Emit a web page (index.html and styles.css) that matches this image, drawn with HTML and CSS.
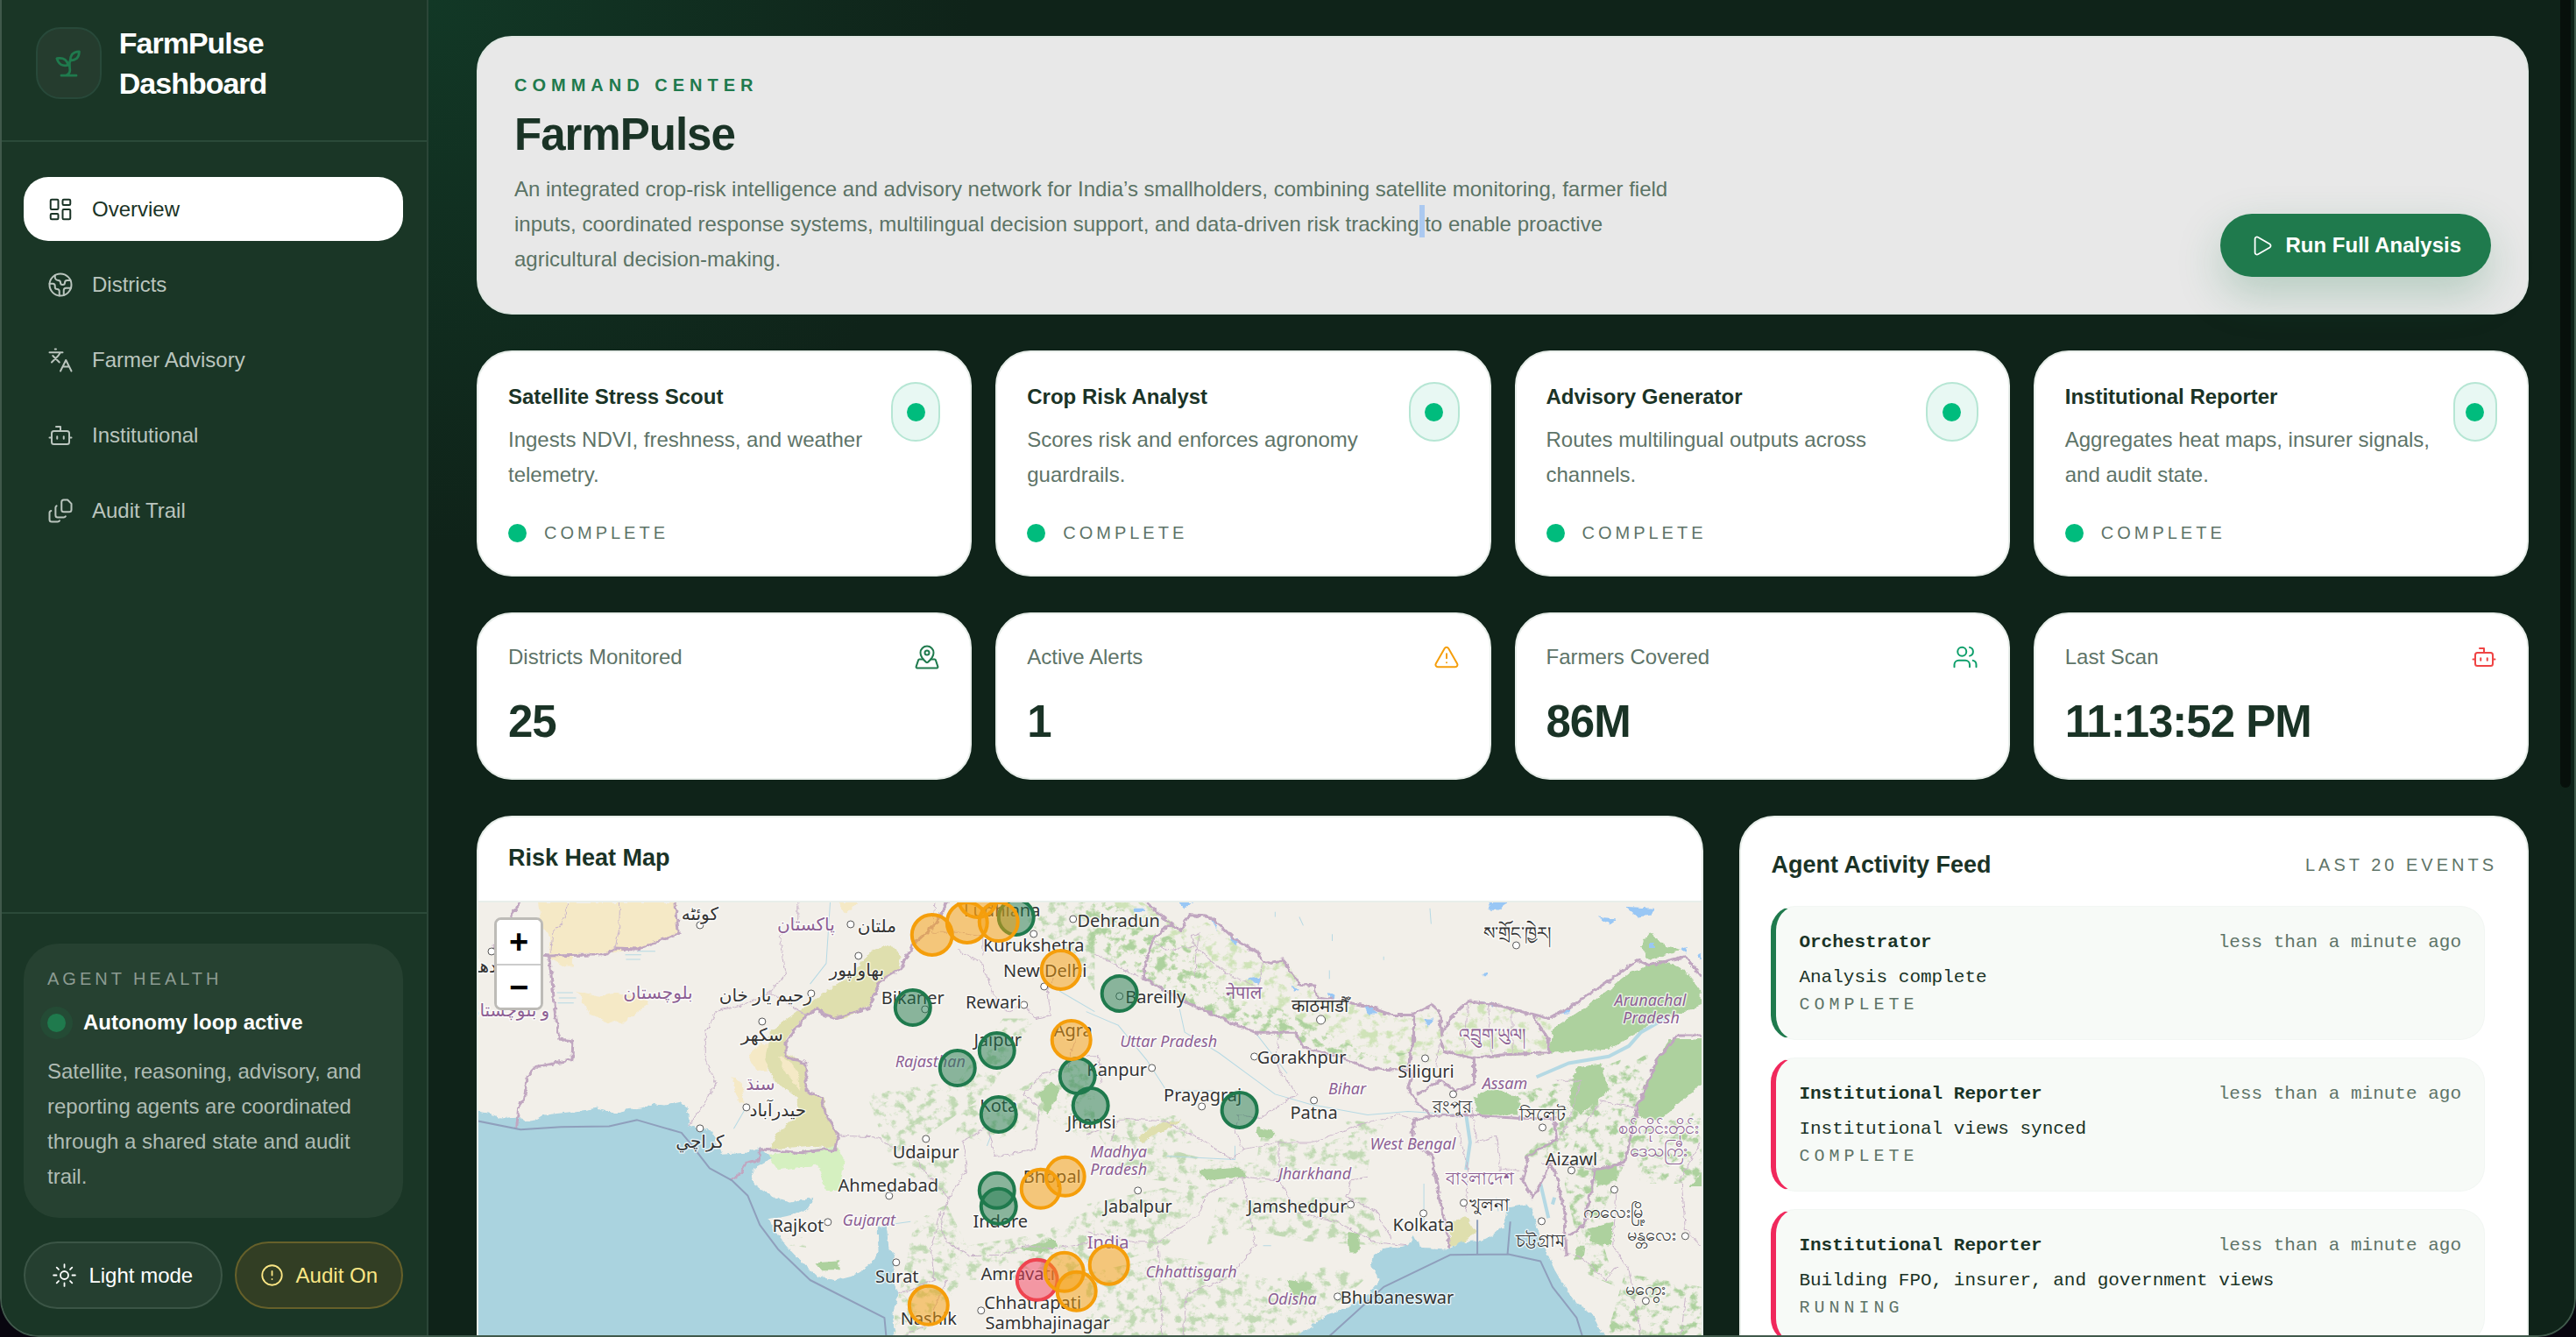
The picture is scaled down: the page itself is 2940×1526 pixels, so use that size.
FILE: index.html
```html
<!DOCTYPE html>
<html lang="en">
<head>
    <meta charset="utf-8">
    <title>FarmPulse Dashboard</title>
    <link rel="stylesheet" href="styles.css">
</head>

<body>
    <svg class="sprite" aria-hidden="true">
        <symbol id="bot" viewBox="0 0 24 24">
            <path d="M12 8V4H8" /><rect x="4" y="8" width="16" height="12" rx="2" /><path d="M2 14h2M20 14h2M15 13v2M9 13v2" />
        </symbol>
    </svg>

    <div class="window">
        <aside class="sidebar">
            <div class="brand">
                <div class="brand-logo">
                    <svg class="icon" viewBox="0 0 24 24"><path d="M7 20h10M10 20c5.500-2.500.8-6.400 3-10" /><path d="M9.500 9.400c1.100.8 1.800 2.200 2.300 3.700-2 .4-3.500.4-4.800-.3-1.200-.6-2.300-1.900-3-4.200 2.800-.5 4.400 0 5.500.8z" /><path d="M14.100 6a7 7 0 0 0-1.100 4c1.900-.1 3.300-.6 4.300-1.400 1-1 1.600-2.300 1.700-4.600-2.700.1-4 1-4.900 2z" /></svg>
                </div>
                <div class="brand-name">FarmPulse Dashboard</div>
            </div>

            <nav class="nav">
                <a href="#overview" class="nav-item active">
                    <svg class="icon" viewBox="0 0 24 24"><rect x="3" y="3" width="7" height="9" rx="1" /><rect x="14" y="3" width="7" height="5" rx="1" /><rect x="14" y="12" width="7" height="9" rx="1" /><rect x="3" y="16" width="7" height="5" rx="1" /></svg>
                    Overview
                </a>
                <a href="#districts" class="nav-item">
                    <svg class="icon" viewBox="0 0 24 24"><path d="M21.540 15H17a2 2 0 0 0-2 2v4.540M7 3.340V5a3 3 0 0 0 3 3 2 2 0 0 1 2 2c0 1.100.9 2 2 2a2 2 0 0 0 2-2c0-1.100.9-2 2-2h3.170M11 21.950V18a2 2 0 0 0-2-2 2 2 0 0 1-2-2v-1a2 2 0 0 0-2-2H2.050" /><circle cx="12" cy="12" r="10" /></svg>
                    Districts
                </a>
                <a href="#advisory" class="nav-item">
                    <svg class="icon" viewBox="0 0 24 24"><path d="m5 8 6 6M4 14l6-6 2-3M2 5h12M7 2h1M22 22l-5-10-5 10M14 18h6" /></svg>
                    Farmer Advisory
                </a>
                <a href="#institutional" class="nav-item">
                    <svg class="icon"><use href="#bot" /></svg>
                    Institutional
                </a>
                <a href="#audit" class="nav-item">
                    <svg class="icon" viewBox="0 0 24 24"><path d="M15 2h3.500L22 5.500V11a2 2 0 0 1-2 2h-5a2 2 0 0 1-2-2V4a2 2 0 0 1 2-2z" /><path d="M8.500 7.500A2 2 0 0 0 7.500 9v7a2 2 0 0 0 2 2h5.500a2 2 0 0 0 1.700-1" /><path d="M3.500 12A2 2 0 0 0 2 14v6a2 2 0 0 0 2 2h5.500a2 2 0 0 0 1.700-1" /></svg>
                    Audit Trail
                </a>
            </nav>

            <div class="sidebar-footer">
                <section class="health">
                    <div class="label">Agent Health</div>
                    <div class="health-state"><span class="health-dot"></span>Autonomy loop active</div>
                    <p>Satellite, reasoning, advisory, and reporting agents are coordinated through a shared state and audit trail.</p>
                </section>
                <div class="toggles">
                    <button type="button" class="toggle toggle-theme">
                        <svg class="icon" viewBox="0 0 24 24"><circle cx="12" cy="12" r="4" /><path d="M12 1v3M12 20v3M4.200 4.200l2 2M17.800 17.800l2 2M1 12h3M20 12h3M6.200 17.800l-2 2M19.800 4.200l-2 2" /></svg>
                        Light mode
                    </button>
                    <button type="button" class="toggle toggle-audit">
                        <svg class="icon" viewBox="0 0 24 24"><circle cx="12" cy="12" r="10" /><path d="M12 8v4M12 16h.01" /></svg>
                        Audit On
                    </button>
                </div>
            </div>
        </aside>

        <main class="main">
            <header class="hero">
                <div class="hero-text">
                    <div class="eyebrow">Command Center</div>
                    <h1>FarmPulse</h1>
                    <p>An integrated crop-risk intelligence and advisory network for India’s smallholders, combining satellite monitoring, farmer field inputs, coordinated response systems, multilingual decision support, and data-driven risk tracking<span class="selected"> </span>to enable proactive agricultural decision-making.</p>
                </div>
                <button type="button" class="run">
                    <svg class="icon" viewBox="0 0 24 24"><path d="M5 5a2 2 0 0 1 3-1.700l12 7a2 2 0 0 1 0 3.400l-12 7A2 2 0 0 1 5 19z" /></svg>
                    Run Full Analysis
                </button>
            </header>

            <section class="grid">
                <article class="card agent">
                    <div class="agent-top">
                        <div>
                            <h2>Satellite Stress Scout</h2>
                            <p>Ingests NDVI, freshness, and weather telemetry.</p>
                        </div>
                        <span class="pill"><span class="dot"></span></span>
                    </div>
                    <div class="status label"><span class="dot"></span>Complete</div>
                </article>
                <article class="card agent">
                    <div class="agent-top">
                        <div>
                            <h2>Crop Risk Analyst</h2>
                            <p>Scores risk and enforces agronomy guardrails.</p>
                        </div>
                        <span class="pill"><span class="dot"></span></span>
                    </div>
                    <div class="status label"><span class="dot"></span>Complete</div>
                </article>
                <article class="card agent">
                    <div class="agent-top">
                        <div>
                            <h2>Advisory Generator</h2>
                            <p>Routes multilingual outputs across channels.</p>
                        </div>
                        <span class="pill"><span class="dot"></span></span>
                    </div>
                    <div class="status label"><span class="dot"></span>Complete</div>
                </article>
                <article class="card agent">
                    <div class="agent-top">
                        <div>
                            <h2>Institutional Reporter</h2>
                            <p>Aggregates heat maps, insurer signals, and audit state.</p>
                        </div>
                        <span class="pill"><span class="dot"></span></span>
                    </div>
                    <div class="status label"><span class="dot"></span>Complete</div>
                </article>
            </section>

            <section class="grid">
                <article class="card stat">
                    <div class="stat-top">Districts Monitored
                        <svg class="icon green" viewBox="0 0 24 24"><path d="M18 8c0 3.600-3.900 7.500-5.300 8.700a1 1 0 0 1-1.400 0C9.900 15.500 6 11.600 6 8a6 6 0 0 1 12 0" /><circle cx="12" cy="8" r="2" /><path d="M8.700 14H5a1 1 0 0 0-.9.700l-2 6a1 1 0 0 0 .9 1.300h18a1 1 0 0 0 .9-1.300l-2-6a1 1 0 0 0-.9-.7h-3.700" /></svg>
                    </div>
                    <div class="value">25</div>
                </article>
                <article class="card stat">
                    <div class="stat-top">Active Alerts
                        <svg class="icon amber" viewBox="0 0 24 24"><path d="m21.700 18-8-14a2 2 0 0 0-3.500 0l-8 14A2 2 0 0 0 4 21h16a2 2 0 0 0 1.700-3M12 9v4M12 17h.01" /></svg>
                    </div>
                    <div class="value">1</div>
                </article>
                <article class="card stat">
                    <div class="stat-top">Farmers Covered
                        <svg class="icon emerald" viewBox="0 0 24 24"><path d="M16 21v-2a4 4 0 0 0-4-4H6a4 4 0 0 0-4 4v2M16 3.100a4 4 0 0 1 0 7.800M22 21v-2a4 4 0 0 0-3-3.900" /><circle cx="9" cy="7" r="4" /></svg>
                    </div>
                    <div class="value">86M</div>
                </article>
                <article class="card stat">
                    <div class="stat-top">Last Scan
                        <svg class="icon red"><use href="#bot" /></svg>
                    </div>
                    <div class="value">11:13:52 PM</div>
                </article>
            </section>

            <section class="lower">
                <article class="card map-card">
                    <h2>Risk Heat Map</h2>
                    <div class="map">
                        <svg class="map-canvas" viewBox="2 0 1397 720" preserveAspectRatio="xMinYMin slice">
                            <defs>
                                <filter id="speckle" x="0" y="0" width="100%" height="100%">
                                    <feTurbulence type="fractalNoise" baseFrequency=".04" numOctaves="5" seed="7" />
                                    <feColorMatrix values="0 0 0 0 0  0 0 0 0 0  0 0 0 0 0  0 5 0 0 -2.500" result="mask" />
                                    <feComposite in="SourceGraphic" in2="mask" operator="in" />
                                </filter>
                                <filter id="rough">
                                    <feTurbulence type="fractalNoise" baseFrequency=".06" numOctaves="3" seed="3" />
                                    <feDisplacementMap in="SourceGraphic" scale="14" xChannelSelector="R" yChannelSelector="G" />
                                </filter>
                            </defs>

                            <!-- western half -->
                            <g transform="translate(-14 -119) scale(.459 .393)">
                                <g filter="url(#rough)">
                                    <path class="desert" d="M183 303H530V395L430 435 350 450 210 455 215 415 190 360ZM280 560 340 575 380 565 450 580 455 600 400 650 350 650 310 625ZM205 460 270 460 270 490 250 490ZM705 745 740 710 760 720 755 790 725 795ZM665 810 690 825 695 890 680 880ZM930 303H975L950 335Z" />
                                    <path class="scrub" d="M1010 445 1060 425 1085 460 1080 495 1040 525 1010 600 950 640 905 635 880 610 840 640 800 700 800 740 850 770 850 850 895 870 900 920 925 970 925 1015 860 1010 760 1020 780 970 830 920 830 870 770 820 748 760 760 680 830 620 900 560 960 520Z" />
                                    <path class="desert" d="M780 750 810 765 830 800 835 850 800 800Z" />
                                    <path class="marsh" d="M755 1035 840 1025 925 1010 945 1050 935 1140 900 1140 880 1065 780 1080Z" />
                                </g>
                                <path class="sea" filter="url(#rough)" d="M0 905 60 915 90 930 130 925 150 940 180 935 200 920 240 915 290 908 330 900 380 915 400 905 440 900 470 888 500 892 540 882 555 900 560 950 585 960 620 970 628 1000 640 1035 700 1030 735 1015 765 1045 720 1075 712 1100 730 1130 770 1160 810 1175 870 1160 850 1200 800 1215 755 1225 770 1255 800 1300 840 1350 880 1390 920 1400 970 1385 1010 1355 1030 1320 1028 1245 1050 1240 1055 1300 1070 1330 1065 1400 1080 1440 1065 1500 1075 1600 1100 2200 0 2200Z" />
                                <path class="forest sparse" filter="url(#speckle)" d="M1340 303 1568 303V560L1500 440 1420 380ZM1240 900 1320 880 1420 820 1500 780 1568 760V1010L1440 920 1400 960 1300 1000 1220 980ZM1060 1060 1220 1040 1200 1160ZM1070 1500 1120 1230 1200 1180 1250 1300 1568 1240V1400H1240L1110 1600V2200H1070ZM1460 1250 1568 1190V1330H1440ZM1000 860 1230 820 1340 640 1420 640 1300 860 1060 1050ZM800 1280 850 1275 850 1305 810 1300Z" />
                                <path class="forest" filter="url(#rough)" d="M1430 860 1460 820 1480 850 1450 920ZM1380 1310 1460 1280 1480 1300 1440 1320ZM875 1350 930 1345 935 1370 890 1370Z" />
                                <path class="river" d="M910 303 900 480 860 540M700 900 670 960M1300 1010 1310 980M1110 1230 1050 1240M1568 620 1480 560M230 565H270M235 580H278M232 595H272M400 455H440M430 445H475M402 468H438" />
                                <g filter="url(#rough)">
                                    <path class="border" d="M1200 303 1170 370 1115 425 1085 495 1035 530 1005 610 920 640 895 630 880 610 850 630 800 710 800 750 850 770 850 850 890 870 895 910 930 980 920 1025 895 1020 840 1030 735 1020 735 1050 700 1060 685 1090 665 1110M140 303 80 395 75 440 210 458 350 455 375 435 430 438 520 400 532 390 525 303M210 458 235 700 270 705 268 760 180 780 155 810 150 870 135 890 130 960" />
                                    <path class="state" d="M260 303 245 360 220 390 215 450M387 303 385 380 375 435M560 950 600 880 625 830 600 760 600 680 625 620 690 600 760 565 800 510 785 400 830 350 830 303M760 565 850 630M930 980 1030 985 1060 1015 1110 1020 1140 1080 1180 1130 1205 1160 1185 1230 1200 1290 1260 1330 1330 1330 1400 1300 1460 1310 1568 1290M1225 440 1290 480 1310 560 1350 620 1390 600 1420 640 1460 630 1450 560 1470 500M1250 1080 1240 1000 1300 950 1320 1040 1380 1030 1420 1020 1430 900 1390 860 1440 800 1500 780 1520 700M1185 1200 1160 1310 1170 1400 1080 1440M1205 1160 1250 1080M1080 1568 1150 1530 1200 1400M1170 303 1165 390 1240 390 1290 400 1290 460" />
                                </g>
                                <path class="zone" d="M0 930 140 963 240 955 360 953 430 935 540 972 560 1000 610 1075 665 1110 705 1155 735 1240 780 1310 860 1400 1045 1510 1060 1700" />
                            </g>

                            <!-- eastern half -->
                            <g transform="translate(696 -119) scale(.459 .393)">
                                <path class="meadow" filter="url(#speckle)" d="M0 303H140L240 380 300 360 440 480 490 470 560 560 700 610 810 640 870 610 890 690 960 590 1120 630 1160 660 1150 745 960 760 890 740 820 790 640 750 500 690 360 650 240 580 130 500 0 420Z" />
                                <path class="forest" filter="url(#speckle)" d="M0 303H60L250 430 380 600 480 610 560 660 700 740 810 740 700 770 540 720 360 650 240 590 140 520 0 440ZM1060 860 1200 820 1330 760 1300 900 1230 960 1170 1050 1090 1040 1180 930ZM1250 840 1400 740 1380 900 1340 1060 1270 1240 1320 1420 1240 1380 1190 1120ZM1350 980 1530 900V1120H1380ZM1340 1380 1530 1420V1700H1260Z" />
                                <path class="forest sparse" filter="url(#speckle)" d="M80 930 240 920 280 1000 120 1010ZM20 960 300 1050 420 1060 440 960 560 1010 720 960 700 1080 560 1060 480 1110 330 1130 100 1100ZM330 1160 700 1160 740 1300 560 1290 380 1250 300 1300ZM0 1380 200 1330 300 1350 460 1400 600 1360 700 1390 560 1540 500 2200H0ZM640 930 740 950 700 1060ZM0 1180 200 1130 320 1120 200 1300 100 1340Z" />
                                <g filter="url(#rough)">
                                    <path class="forest" d="M1150 740 1160 670 1250 600 1350 510 1430 470 1490 500 1530 560V600L1400 660 1300 730ZM965 870 1010 840 1080 870 1075 920 975 920ZM1540 700 1450 700 1390 830 1370 920 1420 940 1540 820ZM1400 390 1440 430 1480 440 1400 470 1380 430ZM1220 780 1280 770 1300 850 1230 920 1200 890ZM1260 1080 1320 1060 1320 1110 1270 1130ZM1250 1250 1310 1230 1305 1300 1255 1290ZM1540 1080 1500 1130H1540ZM280 1080 380 1070 400 1100 300 1110ZM420 955 470 970 460 990 430 985ZM650 1260 680 1265 680 1320 655 1320ZM500 1400 570 1410 520 1460ZM1220 1300 1240 1300 1235 1340 1215 1340Z" />
                                    <path class="scrub" d="M905 1230 945 1215 970 1260 940 1290 905 1305ZM130 985 180 945 240 935 200 960 140 1000Z" />
                                    <path class="sea" d="M480 1600 600 1500 650 1480 700 1440 730 1400 710 1360 715 1330 740 1310 800 1300 815 1270 830 1305 905 1310 930 1290 985 1285 1010 1270 1040 1240 1050 1190 1095 1180 1110 1200 1120 1240 1130 1290 1150 1330 1165 1370 1190 1420 1220 1470 1260 1500 1290 1568 1400 2200H300Z" />
                                    <path class="lake" d="M1000 303H1050L1025 325 1005 325ZM1340 315 1410 320 1410 340 1370 345ZM1270 345 1320 350 1300 365ZM690 600 730 625 700 625ZM840 640 865 640 850 665ZM400 525 435 520 430 540ZM510 540 530 560 515 565ZM310 345 320 350 325 385ZM355 400 380 410 370 430ZM1400 420H1415V435H1400ZM980 590 1010 595 1010 605ZM1180 625 1205 605 1200 625ZM230 303H265L245 320ZM600 565 620 570 615 590ZM120 320H145V330H120ZM985 505H998V515H985ZM1480 435 1495 430 1490 450ZM1515 455 1530 450V470Z" />
                                </g>
                                <path class="river wide" d="M945 920 955 1000 945 1080M1120 810 1200 770 1300 750 1350 720 1380 680 1440 640M1130 1120 1150 1220M1160 1180 1165 1160" />
                                <path class="river" d="M230 600 245 680 330 740 400 800 470 860 560 890 700 920 800 910 930 920M0 620 80 660 150 760 200 850 320 850M420 680 500 800M370 1010V1050L200 1040M440 1300 460 1300M1020 1160 1025 1200M840 1120V1230M470 330V345M530 345 540 370M612 395V415M605 500V525M740 460V470M855 320 858 365" />
                                <g filter="url(#rough)">
                                    <path class="border" d="M150 303 190 345 235 385 255 340 310 345 370 410 430 450 440 480 490 470 530 540 570 545 575 580 640 590 700 605 760 630 810 630 860 600 880 620 885 690 905 640 950 590 1020 600 1100 625 1150 640 1200 610 1300 530 1370 470 1400 485 1490 460 1540 530M215 360 165 410 140 520 245 590 300 620 365 655 420 680 520 680 540 725 640 755 700 785 800 790 815 700 815 630M880 700 890 735 960 755 1040 745 1150 740 1150 700 1110 630M815 790 800 840 820 880 860 925 940 920 1080 930 1165 930 1170 990 1100 1040 1085 1110 1110 1160 1140 1100 1150 1060 1165 1080 1190 1200 1195 1330M965 750V830L920 850 880 820 825 860M860 925 815 935 810 1000 860 1040 870 1110 890 1220 905 1310M1540 690 1470 690 1420 760 1370 900 1340 1060 1265 1080 1240 1240 1200 1270" />
                                    <path class="state" d="M20 450 130 520M160 410 200 440 270 430 260 400 280 390 270 520M270 430 350 510 430 550 440 480M480 680 470 760 485 800 525 860 430 930 380 920 370 970 390 1020 360 1050 300 1000 200 940 100 930 0 980M390 1020 480 1000 560 1000 680 950 780 920 810 930M480 1110 520 1200 620 1230 720 1290 800 1300M480 1000 480 1110 390 1100 300 1150 280 1210 180 1290 120 1290 0 1260M700 1100 660 1110 650 1160 720 1200 760 1280M390 1100 420 1300 380 1360 340 1400 250 1440 240 1568M180 1300 190 1568M960 900 970 1000 1020 980 1030 1080 1080 1080M1170 820 1230 820 1200 940 1170 1000M1130 1060 1250 1060 1270 1080M1370 900 1280 880 1230 960M1265 1080 1180 1060M870 780 880 700M1530 1000 1480 1100 1490 1250 1530 1300M1320 1130 1310 1300 1350 1370 1380 1568M1480 1568 1490 1450M0 750 30 750 40 830M80 940 60 1000M920 940 950 1080 945 1200M1000 600 1010 740M1060 620 1060 740M950 600 940 740M1180 1310 1240 1340 1290 1400 1320 1360" />
                                </g>
                                <path class="zone" d="M560 1620 600 1568 740 1420 905 1327 1050 1325 1130 1345 1160 1420 1220 1510 1260 1660M973 1225V1325M1055 1230 1048 1325" />
                            </g>

                            <g class="places">
                                <circle cx="255" cy="26" r="4" /><circle cx="427" cy="25" r="4" /><circle cx="436" cy="61" r="4" /><circle cx="382" cy="104" r="4" /><circle cx="326" cy="136" r="4" /><circle cx="308" cy="234" r="4" /><circle cx="255" cy="258" r="4" /><circle cx="17" cy="56" r="4" /><circle cx="636" cy="36" r="4" /><circle cx="681" cy="19" r="4" /><circle cx="625" cy="117" r="4" /><circle cx="648" cy="96" r="4" /><circle cx="513" cy="270" r="4" /><circle cx="471" cy="335" r="4" /><circle cx="401" cy="365" r="4" /><circle cx="479" cy="411" r="4" /><circle cx="576" cy="466" r="4" /><circle cx="771" cy="189" r="4" /><circle cx="888" cy="176" r="4" /><circle cx="828" cy="233" r="4" /><circle cx="956" cy="226" r="4" /><circle cx="755" cy="329" r="4" /><circle cx="998" cy="345" r="4" /><circle cx="1081" cy="355" r="4" /><circle cx="983" cy="450" r="4" /><circle cx="1083" cy="178" r="4" /><circle cx="1115" cy="219" r="4" /><circle cx="1217" cy="257" r="4" /><circle cx="1250" cy="306" r="4" /><circle cx="1127" cy="343" r="4" /><circle cx="1216" cy="364" r="4" /><circle cx="1299" cy="328" r="4" /><circle cx="1380" cy="381" r="4" /><circle cx="1335" cy="455" r="4" /><circle cx="1187" cy="49" r="4" /><circle cx="964" cy="134" r="5" /><circle cx="734" cy="107" r="4" /><circle cx="512" cy="122" r="4" />
                            </g>

                            <g class="cities">
                                <text x="255" y="20">كوئٹه</text>
                                <text x="457" y="34">ملتان</text>
                                <text x="434" y="84">بهاولپور</text>
                                <text x="330" y="113">رحيم يار خان</text>
                                <text x="326" y="158">سکھر</text>
                                <text x="344" y="244">حيدرآباد</text>
                                <text x="255" y="280">کراچي</text>
                                <text x="14" y="80">قندهار</text>
                                <text x="600" y="16">Ludhiana</text>
                                <text x="636" y="56">Kurukshetra</text>
                                <text x="733" y="28">Dehradun</text>
                                <text x="649" y="85">New Delhi</text>
                                <text x="590" y="121">Rewari</text>
                                <text x="498" y="116">Bikaner</text>
                                <text x="681" y="153">Agra</text>
                                <text x="595" y="164">Jaipur</text>
                                <text x="596" y="239">Kota</text>
                                <text x="513" y="292">Udaipur</text>
                                <text x="470" y="330">Ahmedabad</text>
                                <text x="367" y="376">Rajkot</text>
                                <text x="598" y="371">Indore</text>
                                <text x="657" y="320">Bhopal</text>
                                <text x="480" y="434">Surat</text>
                                <text x="618" y="431">Amravati</text>
                                <text x="635" y="464">Chhatrapati</text>
                                <text x="652" y="487">Sambhajinagar</text>
                                <text x="516" y="482">Nashik</text>
                                <text x="775" y="115">Bareilly</text>
                                <text x="731" y="198">Kanpur</text>
                                <text x="702" y="258">Jhansi</text>
                                <text x="942" y="184">Gorakhpur</text>
                                <text x="829" y="227">Prayagraj</text>
                                <text x="956" y="247">Patna</text>
                                <text x="755" y="354">Jabalpur</text>
                                <text x="937" y="354">Jamshedpur</text>
                                <text x="1081" y="375">Kolkata</text>
                                <text x="1051" y="458">Bhubaneswar</text>
                                <text x="1084" y="200">Siliguri</text>
                                <text x="1250" y="300">Aizawl</text>
                                <text x="963" y="125">काठमाडौँ</text>
                                <text x="1114" y="240">রংপুর</text>
                                <text x="1217" y="249">সিলেট</text>
                                <text x="1157" y="352">খুলনা</text>
                                <text x="1215" y="393">চট্টগ্রাম</text>
                                <text x="1188" y="42">ས་གྲོང་ཁྱེར།</text>
                                <text x="1299" y="360">ကလေးမြို့</text>
                                <text x="1342" y="386">မန္တလေး</text>
                                <text x="1335" y="448">မကွေး</text>
                            </g>
                            <g class="regions">
                                <text x="376" y="32">پاکستان</text>
                                <text x="207" y="110">بلوچستان</text>
                                <text x="36" y="130">و بلوچستان</text>
                                <text x="324" y="214">سنڌ</text>
                                <text x="876" y="110">नेपाल</text>
                                <text x="1145" y="322">বাংলাদেশ</text>
                                <text x="1160" y="158">འབྲུག་ཡུལ།</text>
                                <text x="1350" y="264">စစ်ကိုင်းတိုင်း</text>
                                <text x="1350" y="290">ဒေသကြီး</text>
                                <text x="721" y="395">India</text>
                            </g>
                            <g class="regions states">
                                <text x="518" y="188">Rajasthan</text>
                                <text x="448" y="369">Gujarat</text>
                                <text x="790" y="165">Uttar Pradesh</text>
                                <text x="994" y="219">Bihar</text>
                                <text x="733" y="291">Madhya</text>
                                <text x="733" y="311">Pradesh</text>
                                <text x="957" y="316">Jharkhand</text>
                                <text x="1069" y="282">West Bengal</text>
                                <text x="816" y="428">Chhattisgarh</text>
                                <text x="931" y="459">Odisha</text>
                                <text x="1174" y="213">Assam</text>
                                <text x="1340" y="118">Arunachal</text>
                                <text x="1341" y="138">Pradesh</text>
                            </g>

                            <g class="marker low">
                                <circle cx="616" cy="17" r="20" /><circle cx="498" cy="120" r="20" /><circle cx="594" cy="169" r="20" /><circle cx="549" cy="189" r="20" /><circle cx="596" cy="242" r="20" /><circle cx="686" cy="198" r="20" /><circle cx="701" cy="232" r="20" /><circle cx="734" cy="104" r="20" /><circle cx="871" cy="237" r="20" /><circle cx="594" cy="329" r="20" /><circle cx="596" cy="347" r="20" />
                            </g>
                            <g class="marker high"><circle cx="640" cy="431" r="23" /></g>
                            <g class="marker medium">
                                <circle cx="520" cy="37" r="23" /><circle cx="560" cy="23" r="23" /><circle cx="572" cy="-5" r="22" /><circle cx="596" cy="22" r="22" /><circle cx="667" cy="77" r="22" /><circle cx="679" cy="157" r="22" /><circle cx="672" cy="313" r="22" /><circle cx="644" cy="327" r="22" /><circle cx="671" cy="422" r="22" /><circle cx="685" cy="444" r="22" /><circle cx="722" cy="414" r="22" /><circle cx="516" cy="460" r="22" />
                            </g>
                        </svg>
                        <div class="zoom">
                            <button type="button" aria-label="Zoom in">+</button>
                            <button type="button" aria-label="Zoom out">−</button>
                        </div>
                    </div>
                </article>

                <article class="card feed">
                    <div class="feed-head">
                        <h2>Agent Activity Feed</h2>
                        <span class="label">Last 20 events</span>
                    </div>
                    <ul>
                        <li class="event">
                            <div class="event-top"><strong>Orchestrator</strong><time>less than a minute ago</time></div>
                            <p>Analysis complete</p>
                            <div class="label">Complete</div>
                        </li>
                        <li class="event rose">
                            <div class="event-top"><strong>Institutional Reporter</strong><time>less than a minute ago</time></div>
                            <p>Institutional views synced</p>
                            <div class="label">Complete</div>
                        </li>
                        <li class="event rose">
                            <div class="event-top"><strong>Institutional Reporter</strong><time>less than a minute ago</time></div>
                            <p>Building FPO, insurer, and government views</p>
                            <div class="label">Running</div>
                        </li>
                    </ul>
                </article>
            </section>

            <div class="scrollbar"></div>
        </main>
    </div>
</body>

</html>
```

FILE: styles.css
```css
* {
    box-sizing: border-box;
}

body {
    margin: 0;
    background: #08060f;
    color: #1a3326;
    font: 24px/40px "Liberation Sans", Arial, sans-serif;
}

h1, h2, p, ul {
    margin: 0;
    padding: 0;
}

button {
    font: inherit;
    cursor: pointer;
}

.sprite {
    display: none;
}

.icon {
    width: 30px;
    height: 30px;
    flex: none;
    fill: none;
    stroke: currentColor;
    stroke-width: 1.6;
    stroke-linecap: round;
    stroke-linejoin: round;
}

.label {
    color: #5e7468;
    font-size: 20px;
    line-height: 27px;
    letter-spacing: 4px;
    text-transform: uppercase;
}

.window {
    display: flex;
    height: 100vh;
    overflow: hidden;
    border: 2px solid #40594b;
    border-top: 0;
    border-radius: 0 0 44px 44px;
    background: #0f2319;
}

/* sidebar */

.sidebar {
    display: flex;
    flex-direction: column;
    flex: none;
    width: 487px;
    border-right: 2px solid #2b4638;
    background: #1a3626;
    color: #fff;
}

.brand {
    display: flex;
    align-items: center;
    gap: 20px;
    padding: 26px 41px 42px 39px;
    border-bottom: 2px solid #2b4a39;
}

.brand-logo {
    display: flex;
    align-items: center;
    justify-content: center;
    width: 82px;
    height: 82px;
    border: 2px solid #28493a;
    border-radius: 28px;
    background: #253c2e;
    color: #1f7a4d;
}

    .brand-logo .icon {
        width: 41px;
        height: 41px;
    }

.brand-name {
    font-size: 34px;
    line-height: 46px;
    font-weight: bold;
    letter-spacing: -1px;
}

.nav {
    display: flex;
    flex-direction: column;
    gap: 13px;
    padding: 40px 27px 40px 25px;
}

.nav-item {
    display: flex;
    align-items: center;
    gap: 21px;
    height: 73px;
    padding: 0 27px;
    border-radius: 28px;
    color: #bac5be;
    text-decoration: none;
}

    .nav-item.active {
        background: #fff;
        color: #1a3326;
    }

.sidebar-footer {
    margin-top: auto;
    padding: 34px 27px 30px 25px;
    border-top: 2px solid #2b4a39;
}

.health {
    padding: 27px;
    border-radius: 40px;
    background: #264131;
}

    .health .label {
        color: #8c9b92;
    }

    .health p {
        color: #b0bcb4;
    }

.health-state {
    display: flex;
    align-items: center;
    gap: 20px;
    margin: 19px 0;
    line-height: 34px;
    font-weight: bold;
}

.health-dot {
    width: 21px;
    height: 21px;
    border-radius: 50%;
    background: #1f7a4d;
    box-shadow: 0 0 0 8px #244b35;
}

.toggles {
    display: flex;
    gap: 14px;
    margin-top: 27px;
}

.toggle {
    display: flex;
    align-items: center;
    justify-content: center;
    gap: 14px;
    height: 77px;
    padding: 0 27px;
    border: 2px solid #3b5546;
    border-radius: 39px;
    background: #253f30;
    color: #fff;
    white-space: nowrap;
}

    .toggle .icon {
        width: 27px;
        height: 27px;
    }

.toggle-theme {
    flex: 1;
}

.toggle-audit {
    border-color: #66602a;
    background: #323e24;
    color: #fbe685;
}

/* main column */

.main {
    position: relative;
    display: flex;
    flex-direction: column;
    gap: 41px;
    flex: 1;
    min-width: 0;
    padding: 41px 52px 54px 55px;
    overflow: hidden;
    background: radial-gradient(circle at 0 0, #123826 0, #0f2319 620px);
}

.hero, .lower, .grid {
    flex: none;
}

.hero {
    display: flex;
    align-items: flex-end;
    justify-content: space-between;
    padding: 41px;
    border: 2px solid #dfe6e2;
    border-radius: 40px;
    background: #e8e8e8;
}

    .hero p {
        max-width: 1340px;
        color: #5b7365;
    }

.eyebrow {
    color: #1f7a4d;
    font-size: 20px;
    line-height: 27px;
    font-weight: bold;
    letter-spacing: 6px;
    text-transform: uppercase;
}

h1 {
    margin: 12px 0;
    font-size: 51px;
    line-height: 61px;
    letter-spacing: -1px;
}

.selected {
    padding: 8px 0 2px;
    background: #abc9f0;
}

.run {
    display: flex;
    align-items: center;
    gap: 14px;
    height: 72px;
    padding: 0 34px;
    border: 0;
    border-radius: 36px;
    background: #1f7a4d;
    box-shadow: 0 20px 50px rgba(31, 122, 77, .25);
    color: #fff;
    font-weight: bold;
}

    .run .icon {
        width: 27px;
        height: 27px;
    }

.grid {
    display: grid;
    grid-template-columns: repeat(4, 1fr);
    gap: 27px;
}

.card {
    border: 2px solid #e8eeea;
    border-radius: 40px;
    background: #fff;
}

.agent, .stat {
    padding: 34px;
}

    .agent h2 {
        margin-bottom: 12px;
        font-size: 24px;
        line-height: 34px;
    }

    .agent p {
        color: #5e7468;
    }

.agent-top {
    display: flex;
    align-items: flex-start;
    justify-content: space-between;
    gap: 20px;
}

.pill {
    display: flex;
    align-items: center;
    justify-content: center;
    width: 68px;
    height: 68px;
    border: 2px solid #b6e6d4;
    border-radius: 34px;
    background: #e8f8f3;
}

.dot {
    flex: none;
    width: 21px;
    height: 21px;
    border-radius: 50%;
    background: #00bc7d;
}

.status {
    display: flex;
    align-items: center;
    gap: 20px;
    margin-top: 33px;
}

.stat-top {
    display: flex;
    align-items: center;
    justify-content: space-between;
    height: 30px;
    color: #5e7468;
}

.green {
    color: #1f7a4d;
}

.amber {
    color: #f59e0b;
}

.emerald {
    color: #0d9f6a;
}

.red {
    color: #ef4444;
}

.value {
    margin-top: 28px;
    font-size: 51px;
    line-height: 61px;
    font-weight: bold;
    letter-spacing: -1px;
}

.lower {
    display: grid;
    grid-template-columns: 1401fr 901fr;
    gap: 41px;
}

    .lower h2 {
        font-size: 27px;
        line-height: 41px;
    }

/* map */

.map-card {
    overflow: hidden;
}

    .map-card h2 {
        padding: 26px 34px 28px;
    }

.map {
    position: relative;
    height: 720px;
    border-top: 2px solid #e8eeea;
    background: #f2efe9;
}

.map-canvas {
    display: block;
    width: 100%;
    height: 100%;
}

    .map-canvas path {
        fill: none;
        vector-effect: non-scaling-stroke;
        stroke-linejoin: round;
    }

    .map-canvas .sea {
        fill: #aad3df;
    }

    .map-canvas .lake {
        fill: #99c7f5;
    }

    .map-canvas .desert {
        fill: #f5e9c6;
    }

    .map-canvas .scrub {
        fill: #dfdfae;
    }

    .map-canvas .marsh {
        fill: #d5f0c0;
    }

    .map-canvas .meadow {
        fill: #cfe3b8;
    }

    .map-canvas .forest {
        fill: #add19e;
    }

    .map-canvas .sparse {
        opacity: .7;
    }

    .map-canvas .river {
        stroke: #b5d9e4;
        stroke-width: 1;
    }

    .map-canvas .wide {
        stroke-width: 4;
    }

    .map-canvas .border {
        stroke: #c0a6c0;
        stroke-width: 3;
    }

    .map-canvas .state {
        stroke: #cbb6cb;
        stroke-width: 1;
    }

    .map-canvas .zone {
        stroke: #8f9fbc;
        stroke-width: 2;
    }

.places circle {
    fill: #fff;
    stroke: #555;
    stroke-width: 1;
}

.cities, .regions {
    font: 20px/1 "Noto Sans", "DejaVu Sans", sans-serif;
    text-anchor: middle;
    fill: #333;
    stroke: #fff;
    stroke-width: 3;
    stroke-opacity: .7;
    stroke-linejoin: round;
    paint-order: stroke;
}

.regions {
    fill: #8d5f94;
}

.states {
    font-size: 18px;
    font-style: italic;
}

.marker {
    fill-opacity: .5;
    stroke-width: 4;
}

.low {
    fill: #1f7a4d;
    stroke: #1f7a4d;
}

.medium {
    fill: #f59e0b;
    stroke: #f59e0b;
}

.high {
    fill: #f43f5e;
    stroke: #ef4450;
}

.zoom {
    position: absolute;
    top: 17px;
    left: 18px;
    overflow: hidden;
    border: 3px solid #bdbbb7;
    border-radius: 8px;
    background: #fff;
}

    .zoom button {
        display: block;
        width: 50px;
        height: 50px;
        padding: 0;
        border: 0;
        background: #fff;
        color: #000;
        font-size: 38px;
        line-height: 50px;
        font-weight: bold;
    }

    .zoom button + button {
        border-top: 2px solid #ccc;
    }

/* feed */

.feed {
    padding: 34px;
}

.feed-head {
    display: flex;
    align-items: center;
    justify-content: space-between;
    margin-bottom: 26px;
}

.feed ul {
    display: flex;
    flex-direction: column;
    gap: 20px;
    padding-right: 14px;
    list-style: none;
}

.event {
    padding: 27px 26px 26px;
    border: 1px solid #f2f6f3;
    border-left: 6px solid #1f7a4d;
    border-radius: 28px;
    background: #f7faf7;
    font-family: "Liberation Mono", monospace;
    font-size: 21px;
}

    .event.rose {
        border-left-color: #f0285c;
    }

    .event p {
        margin-top: 10px;
        line-height: 34px;
    }

    .event .label {
        letter-spacing: 5px;
    }

.event-top {
    display: flex;
    justify-content: space-between;
    line-height: 27px;
}

    .event-top time {
        color: #5e7468;
    }

.scrollbar {
    position: absolute;
    top: 0;
    right: 4px;
    width: 12px;
    height: 59%;
    border-radius: 0 0 6px 6px;
    background: #07100b;
}
```
